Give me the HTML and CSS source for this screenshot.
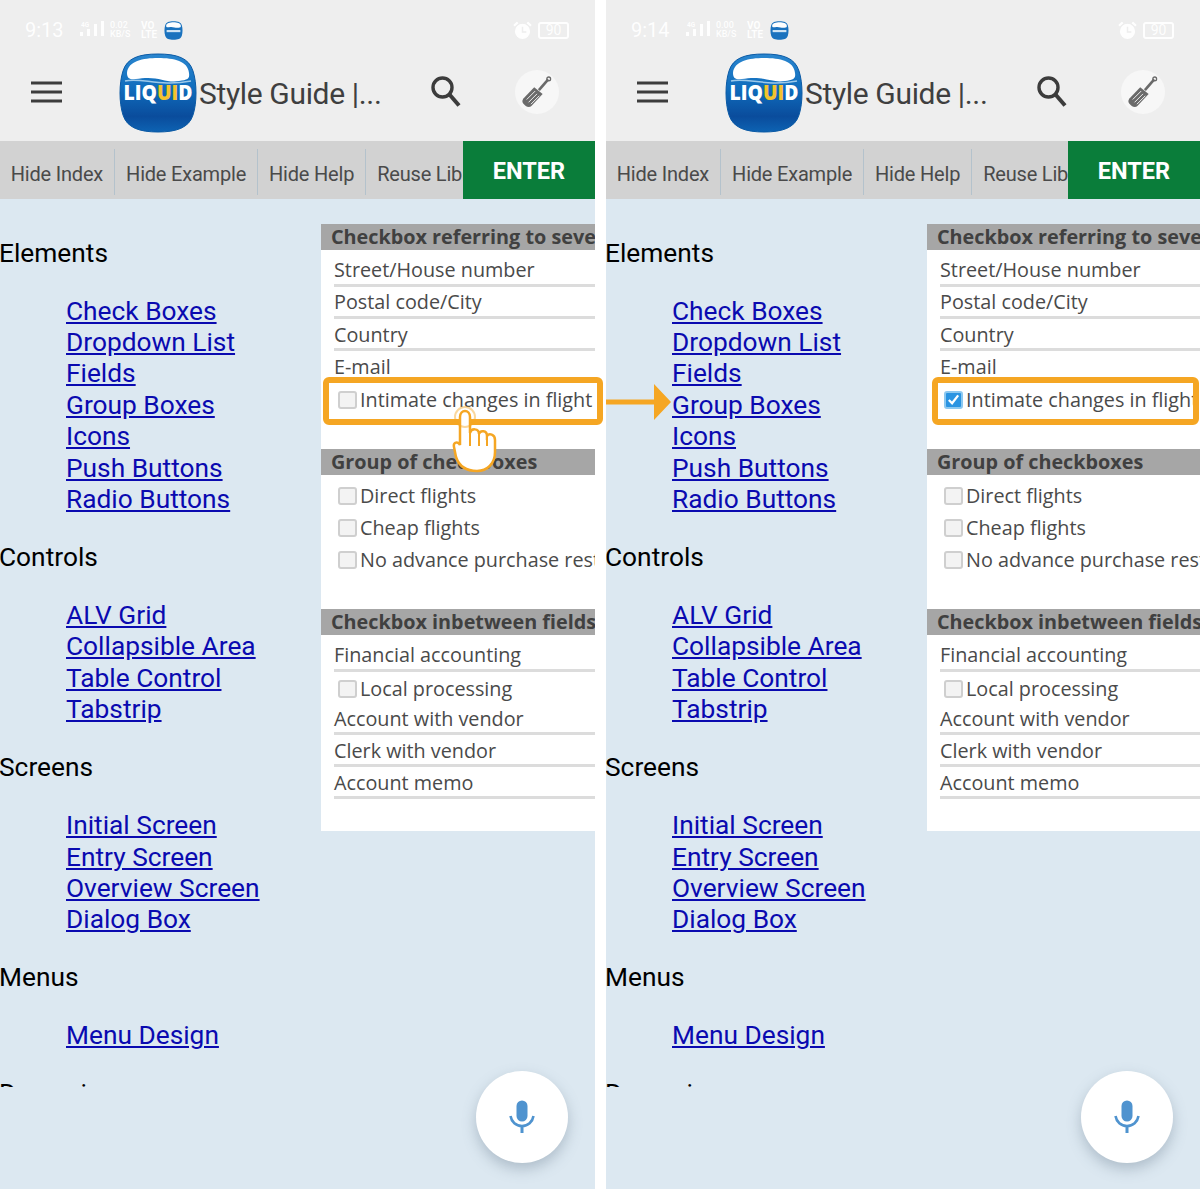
FILE: index.html
```html
<!DOCTYPE html>
<html lang="en">
<head>
<meta charset="utf-8">
<title>Liquid Style Guide</title>
<link rel="stylesheet" href="styles.css">
</head>
<body>
<svg class="defs" width="0" height="0" aria-hidden="true">
  <defs>
    <linearGradient id="lg" x1="0" y1="0" x2="0" y2="1">
      <stop offset="0" stop-color="#2a86cf"/><stop offset=".45" stop-color="#0f6cbc"/><stop offset=".8" stop-color="#0a4c9c"/><stop offset="1" stop-color="#0d63b3"/>
    </linearGradient>
    <symbol id="logo" viewBox="0 0 78 80">
      <path d="M39 1C58 1 70 5 74 18C78 30 78 50 74 62C70 75 57 79 39 79C21 79 8 75 4 62C0 50 0 30 4 18C8 5 20 1 39 1Z" fill="url(#lg)" stroke="#0b5aa5" stroke-width="1"/>
      <path d="M8 20C9 8 24 5 39 5C55 5 69 8 70 20C71 26 68 27 60 28C48 30 40 24 26 25C18 25 8 30 8 20Z" fill="#fff"/>
      <path d="M6 28C22 24 40 34 72 28" stroke="#9cc9ea" stroke-width="1.5" fill="none"/>
      <text x="39" y="47" text-anchor="middle" class="logo-text" textLength="69" lengthAdjust="spacingAndGlyphs">LIQ<tspan fill="#f2c32e">UI</tspan>D</text>
    </symbol>
    <symbol id="tiny" viewBox="0 0 78 80">
      <path d="M39 1C58 1 70 5 74 18C78 30 78 50 74 62C70 75 57 79 39 79C21 79 8 75 4 62C0 50 0 30 4 18C8 5 20 1 39 1Z" fill="#0f6cbc"/>
      <path d="M8 20C9 8 24 5 39 5C55 5 69 8 70 20C71 26 68 27 60 28C48 30 40 24 26 25C18 25 8 30 8 20Z" fill="#fff"/>
      <rect x="10" y="38" width="58" height="9" fill="#cfe4f5"/>
    </symbol>
    <symbol id="signal" viewBox="0 0 24 18">
      <text x="1" y="6" class="net-text">4G</text>
      <rect x="0" y="11" width="3" height="4" fill="#fff"/><rect x="7" y="8" width="3" height="7" fill="#fff"/><rect x="14" y="3" width="3" height="12" fill="#fff"/><rect x="21" y="0" width="3" height="15" fill="#fff"/>
    </symbol>
    <symbol id="alarm" viewBox="0 0 20 20">
      <path d="M1 5L5 1.500M19 5L15 1.500" stroke="#fff" stroke-width="2.400" fill="none"/>
      <circle cx="10" cy="11" r="8" fill="#fff"/>
      <path d="M10 6V11.500H14" stroke="#eeeeee" stroke-width="1.600" fill="none"/>
    </symbol>
    <symbol id="menu" viewBox="0 0 31 22">
      <path d="M0 2H31M0 11H31M0 20H31" stroke="#3c3c3c" stroke-width="3" fill="none"/>
    </symbol>
    <symbol id="search" viewBox="0 0 30 32">
      <circle cx="11.5" cy="11.5" r="9.5" fill="none" stroke="#3c3c3c" stroke-width="3.4"/>
      <path d="M18.5 18.5L28 29.5" stroke="#3c3c3c" stroke-width="4" fill="none"/>
    </symbol>
    <symbol id="brush" viewBox="0 0 32 34">
      <path d="M18 15L28 3.500" stroke="#6a6a6a" stroke-width="2.800" fill="none"/>
      <circle cx="28.500" cy="3" r="2" fill="none" stroke="#6a6a6a" stroke-width="1.400"/>
      <path d="M13 12L22 19L10 32C8.500 33.500 6 33.500 4 32L1.500 29.500C0 28 0 26 1.500 24Z" fill="#6a6a6a"/>
      <path d="M5 25L14 16M7 28L16 19M9.500 30L18.500 21" stroke="#f5f5f5" stroke-width="1"/>
    </symbol>
    <symbol id="mic" viewBox="0 0 26 34">
      <rect x="7.500" y="0.500" width="11" height="21" rx="5.500" fill="#4f93cf"/>
      <path d="M1.500 16C2.500 22 7 26 13 26C19 26 23.500 22 24.500 16" fill="none" stroke="#4f93cf" stroke-width="2.600"/>
      <rect x="11.500" y="26" width="3" height="7" fill="#4f93cf"/>
    </symbol>
  </defs>
</svg>

<main class="compare">
  <section class="phone">
    <header class="appbar">
      <div class="status">
        <span class="time">9:13</span>
        <svg class="signal"><use href="#signal"/></svg>
        <span class="speed">0.02<br>KB/S</span>
        <span class="volte">VO<br>LTE</span>
        <svg class="tiny"><use href="#tiny"/></svg>
        <span class="status-right"><svg class="alarm"><use href="#alarm"/></svg><span class="battery">90</span></span>
      </div>
      <div class="titlebar">
        <svg class="menu"><use href="#menu"/></svg>
        <svg class="logo"><use href="#logo"/></svg>
        <span class="title">Style Guide |...</span>
        <svg class="search"><use href="#search"/></svg>
        <span class="brush-wrap"><svg class="brush"><use href="#brush"/></svg></span>
      </div>
    </header>
    <div class="toolbar">
      <div class="tools"><span class="tool">Hide Index</span><span class="tool">Hide Example</span><span class="tool">Hide Help</span><span class="tool">Reuse Library</span></div>
      <span class="enter">ENTER</span>
    </div>
    <div class="content">
      <nav class="index">
        <h2>Elements</h2>
        <ul><li><a href="#">Check Boxes</a></li><li><a href="#">Dropdown List</a></li><li><a href="#">Fields</a></li><li><a href="#">Group Boxes</a></li><li><a href="#">Icons</a></li><li><a href="#">Push Buttons</a></li><li><a href="#">Radio Buttons</a></li></ul>
        <h2>Controls</h2>
        <ul><li><a href="#">ALV Grid</a></li><li><a href="#">Collapsible Area</a></li><li><a href="#">Table Control</a></li><li><a href="#">Tabstrip</a></li></ul>
        <h2>Screens</h2>
        <ul><li><a href="#">Initial Screen</a></li><li><a href="#">Entry Screen</a></li><li><a href="#">Overview Screen</a></li><li><a href="#">Dialog Box</a></li></ul>
        <h2>Menus</h2>
        <ul><li><a href="#">Menu Design</a></li></ul>
        <h2>Dynamics</h2>
      </nav>
      <div class="panel">
        <h3 class="head">Checkbox referring to several fields</h3>
        <div class="fields">
          <div class="field">Street/House number</div>
          <div class="field">Postal code/City</div>
          <div class="field low">Country</div>
          <div class="field low plain">E-mail</div>
          <div class="check"><span class="box"></span>Intimate changes in flight</div>
        </div>
        <h3 class="head gap-a">Group of checkboxes</h3>
        <div class="checks">
          <div class="check"><span class="box"></span>Direct flights</div>
          <div class="check"><span class="box"></span>Cheap flights</div>
          <div class="check"><span class="box"></span>No advance purchase restrictions</div>
        </div>
        <h3 class="head gap-b">Checkbox inbetween fields</h3>
        <div class="fields">
          <div class="field">Financial accounting</div>
          <div class="check tight"><span class="box"></span>Local processing</div>
          <div class="field short">Account with vendor</div>
          <div class="field low">Clerk with vendor</div>
          <div class="field low">Account memo</div>
        </div>
      </div>
      <button class="fab" aria-label="Voice input"><svg class="mic"><use href="#mic"/></svg></button>
    </div>
  </section>

  <section class="phone">
    <header class="appbar">
      <div class="status">
        <span class="time">9:14</span>
        <svg class="signal"><use href="#signal"/></svg>
        <span class="speed">0.00<br>KB/S</span>
        <span class="volte">VO<br>LTE</span>
        <svg class="tiny"><use href="#tiny"/></svg>
        <span class="status-right"><svg class="alarm"><use href="#alarm"/></svg><span class="battery">90</span></span>
      </div>
      <div class="titlebar">
        <svg class="menu"><use href="#menu"/></svg>
        <svg class="logo"><use href="#logo"/></svg>
        <span class="title">Style Guide |...</span>
        <svg class="search"><use href="#search"/></svg>
        <span class="brush-wrap"><svg class="brush"><use href="#brush"/></svg></span>
      </div>
    </header>
    <div class="toolbar">
      <div class="tools"><span class="tool">Hide Index</span><span class="tool">Hide Example</span><span class="tool">Hide Help</span><span class="tool">Reuse Library</span></div>
      <span class="enter">ENTER</span>
    </div>
    <div class="content">
      <nav class="index">
        <h2>Elements</h2>
        <ul><li><a href="#">Check Boxes</a></li><li><a href="#">Dropdown List</a></li><li><a href="#">Fields</a></li><li><a href="#">Group Boxes</a></li><li><a href="#">Icons</a></li><li><a href="#">Push Buttons</a></li><li><a href="#">Radio Buttons</a></li></ul>
        <h2>Controls</h2>
        <ul><li><a href="#">ALV Grid</a></li><li><a href="#">Collapsible Area</a></li><li><a href="#">Table Control</a></li><li><a href="#">Tabstrip</a></li></ul>
        <h2>Screens</h2>
        <ul><li><a href="#">Initial Screen</a></li><li><a href="#">Entry Screen</a></li><li><a href="#">Overview Screen</a></li><li><a href="#">Dialog Box</a></li></ul>
        <h2>Menus</h2>
        <ul><li><a href="#">Menu Design</a></li></ul>
        <h2>Dynamics</h2>
      </nav>
      <div class="panel">
        <h3 class="head">Checkbox referring to several fields</h3>
        <div class="fields">
          <div class="field">Street/House number</div>
          <div class="field">Postal code/City</div>
          <div class="field low">Country</div>
          <div class="field low plain">E-mail</div>
          <div class="check"><span class="box on"><svg viewBox="0 0 15 15"><path d="M2.500 7.500L6 11L12.500 2.500" fill="none" stroke="#fff" stroke-width="2.400"/></svg></span>Intimate changes in flight</div>
        </div>
        <h3 class="head gap-a">Group of checkboxes</h3>
        <div class="checks">
          <div class="check"><span class="box"></span>Direct flights</div>
          <div class="check"><span class="box"></span>Cheap flights</div>
          <div class="check"><span class="box"></span>No advance purchase restrictions</div>
        </div>
        <h3 class="head gap-b">Checkbox inbetween fields</h3>
        <div class="fields">
          <div class="field">Financial accounting</div>
          <div class="check tight"><span class="box"></span>Local processing</div>
          <div class="field short">Account with vendor</div>
          <div class="field low">Clerk with vendor</div>
          <div class="field low">Account memo</div>
        </div>
      </div>
      <button class="fab" aria-label="Voice input"><svg class="mic"><use href="#mic"/></svg></button>
    </div>
  </section>

  <span class="highlight first"></span>
  <span class="highlight second"></span>
  <svg class="hand" viewBox="0 0 46 68">
    <path d="M8 12C8 4 18 4 18 12V28C19 23 27 23 27 29C28 25 35 25 35 31C37 28 43 29 43 35V47C43 59 35 66 25 66C14 66 7 61 4 52L2 42C1 37 6 36 8 40Z" fill="#fff" stroke="#f5a623" stroke-width="2.500"/>
    <path d="M18 28V41M27 29V41M35 31V41" stroke="#f5a623" stroke-width="2" fill="none"/>
    <circle cx="13" cy="12" r="10" fill="none" stroke="#f5a623" stroke-width="2" opacity=".45"/>
  </svg>
  <svg class="arrow" viewBox="0 0 65 36"><path d="M0 15.500H48V0L65 18L48 36V20.500H0Z" fill="#f5a623"/></svg>
</main>
</body>
</html>
```
FILE: styles.css
```css
* { box-sizing: border-box; }
html, body { margin: 0; padding: 0; background: #fff; }
body { width: 1200px; height: 1189px; overflow: hidden; font-family: "Roboto", "Liberation Sans", sans-serif; }
.defs { position: absolute; }
.logo-text { font: 800 21px "Open Sans", sans-serif; fill: #fff; }
.net-text { font: 700 6.500px "Roboto", sans-serif; fill: #fff; }

.compare { position: relative; display: flex; justify-content: space-between; width: 1200px; height: 1189px; }
.phone { width: 595px; height: 1189px; overflow: hidden; display: flex; flex-direction: column; background: #dce8f1; }
.phone + .phone { width: 594px; }

.appbar { height: 141px; flex: none; background: #eeeeee; padding-top: 17px; }
.status { height: 26px; display: flex; align-items: center; padding: 0 26px 0 25px; color: #fff; opacity: .95; }
.time { font-size: 20px; width: 55px; }
.signal { width: 24px; height: 18px; margin-right: 6px; }
.speed, .volte { font-size: 9px; line-height: 9px; font-weight: 500; }
.speed { width: 31px; }
.volte { width: 23px; font-weight: 700; font-size: 10px; }
.tiny { width: 19px; height: 19px; }
.status-right { margin-left: auto; display: flex; align-items: center; gap: 6px; }
.alarm { width: 19px; height: 19px; }
.battery { width: 31px; height: 17px; border: 2px solid #fff; border-radius: 3px; font-size: 14px; line-height: 13px; text-align: center; }

.titlebar { height: 98px; display: flex; align-items: center; padding-left: 31px; }
.menu { width: 31px; height: 22px; flex: none; margin-right: 58px; }
.logo { width: 78px; height: 80px; flex: none; margin-left: -1px; margin-right: 2px; margin-top: 1px; }
.title { width: 232px; flex: none; font-size: 30px; letter-spacing: -.35px; color: #3f3f3f; white-space: nowrap; margin-top: 3px; }
.search { width: 30px; height: 32px; flex: none; margin-right: 54px; }
.brush-wrap { width: 44px; height: 44px; flex: none; border-radius: 50%; background: #f7f7f7; display: flex; align-items: center; justify-content: center; margin-top: -1px; }
.brush { width: 30px; height: 32px; }

.toolbar { height: 58px; flex: none; display: flex; background: #d2d2d2; }
.tools { flex: 1; min-width: 0; display: flex; overflow: hidden; white-space: nowrap; align-items: center; }
.tool { flex: none; font-size: 20px; letter-spacing: -.2px; color: #4a4a4a; padding: 0 11.200px 0 10.800px; height: 46px; line-height: 51px; border-right: 1px solid #b4c2cc; margin-top: 4px; }
.tool:last-child { border-right: 0; }
.enter { flex: none; width: 132px; background: #0a7d3a; color: #fff; font-size: 23.500px; font-weight: 700; text-align: center; line-height: 60px; }

.content { position: relative; flex: 1; display: flex; align-items: flex-start; }
.index { width: 321px; flex: none; height: 888px; overflow: hidden; color: #000; padding-top: 12px; }
.index h2 { margin: 26.600px 0 0 -1px; font-size: 26.300px; font-weight: 400; line-height: 31.400px; }
.index ul { list-style: none; margin: 26.600px 0 0; padding: 0 0 0 66px; }
.index li { font-size: 26.300px; line-height: 31.400px; white-space: nowrap; }
.index a { color: #0a0ab0; }

.panel { flex: none; width: 290px; margin-top: 25px; height: 607px; margin-right: -30px; background: #fff; font-family: "Open Sans", "Liberation Sans", sans-serif; color: #4a4a4a; font-size: 19.800px; overflow: hidden; }
.head { margin: 0; height: 26px; background: #a6a6a6; color: #404040; font-size: 19.800px; font-weight: 700; line-height: 25px; padding-left: 10px; white-space: nowrap; overflow: hidden; }
.gap-a { margin-top: 32px; }
.gap-b { margin-top: 33px; }
.fields { padding: 5px 0 0 13px; }
.field { height: 32px; line-height: 30px; border-bottom: 3px solid #dcdcdc; white-space: nowrap; }
.field.low { line-height: 32px; }
.field.plain { border-bottom: 0; }
.field.short { height: 30px; line-height: 28px; }
.check { height: 33px; display: flex; align-items: center; white-space: nowrap; overflow: hidden; margin-left: 4px; line-height: 32px; }
.fields .check { height: 34px; }
.fields .check.tight { margin-top: 1px; height: 32px; }
.checks { padding: 5px 0 0 13px; }
.checks .check { height: 32px; }
.box { flex: none; width: 19px; height: 18px; margin-right: 3px; border: 2px solid #cfcfcf; border-radius: 3px; background: #f3f3f3; }
.box svg { display: block; width: 15px; height: 14px; }
.box.on { background: #2a94e2; border-color: #8cc8f0; }

.highlight { position: absolute; top: 377px; height: 48px; border: 6px solid #f5a623; border-radius: 6px; }
.highlight.first { left: 323px; width: 280px; }
.highlight.second { left: 932px; width: 267px; }
.hand { position: absolute; left: 452px; top: 405px; width: 46px; height: 68px; }
.arrow { position: absolute; left: 606px; top: 384px; width: 65px; height: 36px; }

.fab { position: absolute; left: 476px; top: 872px; width: 92px; height: 92px; border: 0; padding: 0; border-radius: 50%; background: #fff; box-shadow: 0 6px 14px rgba(90, 110, 130, .35); display: flex; align-items: center; justify-content: center; }
.phone + .phone .fab { left: 475px; }
.mic { width: 26px; height: 34px; }
```
